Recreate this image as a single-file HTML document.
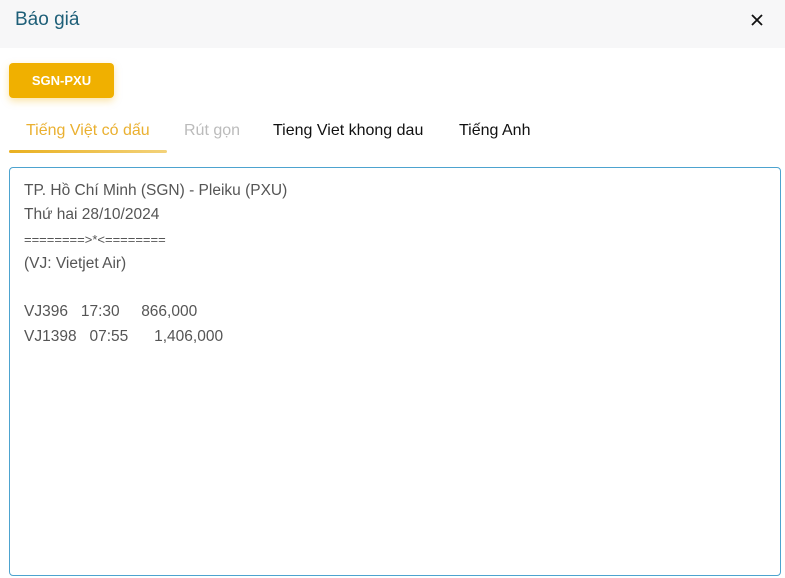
<!DOCTYPE html>
<html><head><meta charset="utf-8"><style>
body{margin:0;width:785px;height:578px;background:#fff;font-family:"Liberation Sans",sans-serif;position:relative;overflow:hidden}
.hdr{position:absolute;left:0;top:0;width:785px;height:48px;background:#f7f7f8}
.title{position:absolute;left:15px;top:9px;font-size:19px;color:#1e5f78}
.x{position:absolute;left:751px;top:14px}
.btn{position:absolute;left:9px;top:63px;width:105px;height:35px;background:#f0b000;border-radius:4px;box-shadow:0 3px 8px rgba(240,176,0,.35);color:#fff;font-weight:bold;font-size:13px;text-align:center;line-height:35px}
.tab{position:absolute;top:122px;font-size:16px;color:#111}
.ul{position:absolute;left:9px;top:150px;width:158px;height:3px;background:linear-gradient(90deg,#e9b020,#f3d27a);border-radius:2px}
.ta{position:absolute;left:9px;top:167px;width:770px;height:407px;border:1px solid #4da3cf;border-radius:4px}
.txt{position:absolute;left:24px;top:179px;font-size:15.5px;line-height:24.3px;color:#555;white-space:pre}
</style></head><body>
<div class="hdr"></div>
<div class="title">Báo giá</div>
<svg class="x" width="12" height="12" viewBox="0 0 12 12"><path d="M1 1L11 11M11 1L1 11" stroke="#111" stroke-width="1.8"/></svg>
<div class="btn">SGN-PXU</div>
<div class="tab" style="left:26px;color:#eab030">Tiếng Việt có dấu</div>
<div class="tab" style="left:184px;color:#bbb">Rút gọn</div>
<div class="tab" style="left:273px">Tieng Viet khong dau</div>
<div class="tab" style="left:459px">Tiếng Anh</div>
<div class="ul"></div>
<div class="ta"></div>
<div class="txt">TP. Hồ Chí Minh (SGN) - Pleiku (PXU)
Thứ hai 28/10/2024
<span style="font-size:13px">========&gt;*&lt;========</span>
(VJ: Vietjet Air)

VJ396   17:30     866,000
VJ1398   07:55      1,406,000</div>
</body></html>
